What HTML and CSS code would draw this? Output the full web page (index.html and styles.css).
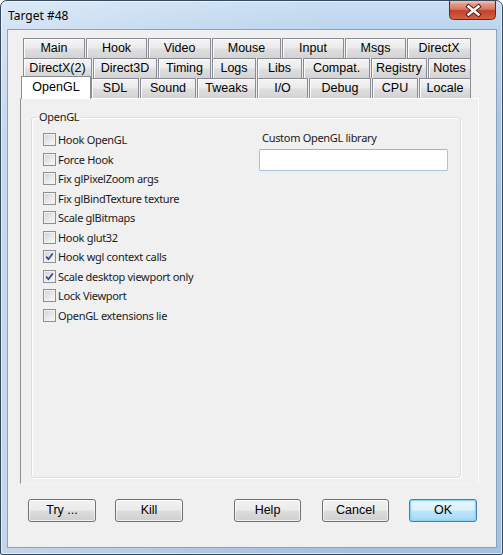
FILE: index.html
```html
<!DOCTYPE html>
<html>
<head>
<meta charset="utf-8">
<title>Target #48</title>
<link rel="stylesheet" href="styles.css">
</head>
<body>
<div class="window">
  <div class="titlebar">
    <span class="title">Target #48</span>
    <div class="close">
      <svg width="47" height="19" viewBox="0 0 47 19">
        <defs>
          <linearGradient id="cg" x1="0" y1="0" x2="0" y2="1">
            <stop offset="0" stop-color="#eab0a2"/>
            <stop offset="0.45" stop-color="#d6765f"/>
            <stop offset="0.52" stop-color="#c2412a"/>
            <stop offset="1" stop-color="#d8623f"/>
          </linearGradient>
        </defs>
        <path d="M0.5 0 V14.5 A4 4 0 0 0 4.5 18.5 H42.5 A4 4 0 0 0 46.5 14.5 V0" fill="url(#cg)" stroke="#6a2418"/>
        <path d="M1.5 1 H45.5" stroke="#f3c9bd" stroke-width="1"/>
        <path d="M19.5 5.5 L29.5 13.5 M29.5 5.5 L19.5 13.5" stroke="#4a2019" stroke-width="4.4" stroke-linecap="square"/>
        <path d="M19.5 5.5 L29.5 13.5 M29.5 5.5 L19.5 13.5" stroke="#ffffff" stroke-width="2.4" stroke-linecap="square"/>
      </svg>
    </div>
  </div>
  <div class="client">
    <div class="tabctl">
      <div class="tabrow">
        <div class="tab w63">Main</div>
        <div class="tab w62">Hook</div>
        <div class="tab w64">Video</div>
        <div class="tab w70">Mouse</div>
        <div class="tab w63">Input</div>
        <div class="tab w62">Msgs</div>
        <div class="tab w65">DirectX</div>
      </div>
      <div class="tabrow">
        <div class="tab w70">DirectX(2)</div>
        <div class="tab w65">Direct3D</div>
        <div class="tab w54">Timing</div>
        <div class="tab w45">Logs</div>
        <div class="tab w46">Libs</div>
        <div class="tab w68">Compat.</div>
        <div class="tab w57">Registry</div>
        <div class="tab w44">Notes</div>
      </div>
      <div class="tabrow">
        <div class="tab selected">OpenGL</div>
        <div class="tab w49">SDL</div>
        <div class="tab w57">Sound</div>
        <div class="tab w60">Tweaks</div>
        <div class="tab w52">I/O</div>
        <div class="tab w63">Debug</div>
        <div class="tab w47">CPU</div>
        <div class="tab w53">Locale</div>
      </div>
      <div class="panel">
        <fieldset class="group">
          <legend>OpenGL</legend>
          <div class="cols">
            <div class="checks">
              <div class="check"><span class="cb"></span>Hook OpenGL</div>
              <div class="check"><span class="cb"></span>Force Hook</div>
              <div class="check"><span class="cb"></span>Fix glPixelZoom args</div>
              <div class="check"><span class="cb"></span>Fix glBindTexture texture</div>
              <div class="check"><span class="cb"></span>Scale glBitmaps</div>
              <div class="check"><span class="cb"></span>Hook glut32</div>
              <div class="check"><span class="cb on"><svg width="11" height="11" viewBox="0 0 11 11"><path d="M2.2 5.6 L4.4 8.2 L8.8 2.4" fill="none" stroke="#2d4790" stroke-width="1.7"/></svg></span>Hook wgl context calls</div>
              <div class="check"><span class="cb on"><svg width="11" height="11" viewBox="0 0 11 11"><path d="M2.2 5.6 L4.4 8.2 L8.8 2.4" fill="none" stroke="#2d4790" stroke-width="1.7"/></svg></span>Scale desktop viewport only</div>
              <div class="check"><span class="cb"></span>Lock Viewport</div>
              <div class="check"><span class="cb"></span>OpenGL extensions lie</div>
            </div>
            <div class="custom">
              <div class="label">Custom OpenGL library</div>
              <div class="input"></div>
            </div>
          </div>
        </fieldset>
      </div>
    </div>
    <div class="btnrow">
      <div class="btn b-try">Try ...</div>
      <div class="btn b-kill">Kill</div>
      <div class="btn b-help">Help</div>
      <div class="btn b-cancel">Cancel</div>
      <div class="btn b-ok default">OK</div>
    </div>
  </div>
</div>
</body>
</html>
```
FILE: styles.css
```css
* { box-sizing: border-box; }
html, body { margin: 0; padding: 0; }
body {
  width: 503px;
  height: 555px;
  overflow: hidden;
  background: #ffffff;
  font-family: "Noto Sans", "DejaVu Sans", sans-serif;
}

.window {
  width: 503px;
  height: 555px;
  border: 1px solid #38495c;
  border-radius: 7px 7px 2px 2px;
  padding: 0 5px 6px 6px;
  display: flex;
  flex-direction: column;
  background:
    linear-gradient(to right, rgba(255,255,255,0.35) 0, rgba(255,255,255,0.1) 45%, rgba(255,255,255,0) 70%),
    linear-gradient(to bottom, #c9def3 0, #bcd5ee 28px, #a9c6e4 120px, #a4c1df 100%);
  box-shadow: inset 0 0 0 1px rgba(255,255,255,0.55);
}

.titlebar {
  height: 28px;
  display: flex;
  justify-content: space-between;
  align-items: flex-start;
}
.title {
  margin: 7px 0 0 1px;
  font-size: 12px;
  line-height: 16px;
  color: #000;
}
.close {
  width: 47px;
  height: 19px;
  margin-right: 1px;
}
.close svg { display: block; }

.client {
  flex: 1;
  display: flex;
  flex-direction: column;
  background: #f0f0f0;
  border: 1px solid #8aa3bd;
}

.tabctl {
  margin: 8px 17px 0 12px;
  display: flex;
  flex-direction: column;
}
.tabrow {
  height: 20px;
  display: flex;
  padding-left: 3px;
}
.tab {
  height: 20px;
  margin-right: 1px;
  border: 1px solid #898c95;
  border-bottom: none;
  background: linear-gradient(to bottom, #f4f4f4 0, #ebebeb 45%, #dedede 55%, #d3d3d3 100%);
  box-shadow: inset 1px 1px 0 #fbfbfb;
  font-family: "Liberation Sans", Arial, sans-serif;
  font-size: 12.5px;
  line-height: 19px;
  text-align: center;
  color: #000;
  white-space: nowrap;
}
.tab.selected {
  position: relative;
  z-index: 1;
  width: 70px;
  height: 23px;
  margin: -2px 0 0 -2px;
  background: #ffffff;
  box-shadow: none;
  line-height: 21px;
}
.w44 { width: 43px; }
.w45 { width: 44px; }
.w46 { width: 45px; }
.w47 { width: 46px; }
.w49 { width: 48px; }
.w52 { width: 51px; }
.w53 { width: 52px; }
.w54 { width: 53px; }
.w57 { width: 56px; }
.w60 { width: 59px; }
.w62 { width: 61px; }
.w63 { width: 62px; }
.w64 { width: 63px; }
.w65 { width: 64px; }
.w68 { width: 67px; }
.w70 { width: 69px; }

.panel {
  height: 386px;
  display: flex;
  flex-direction: column;
  border-left: 1px solid #8d8d8d;
  border-top: 1px solid #ffffff;
  border-right: 1px solid #ffffff;
  border-bottom: 1px solid #f4f4f4;
  padding: 10px 17px 5px 10px;
}

.group {
  flex: 1;
  margin: 0;
  min-width: 0;
  padding: 5px 0 0 5px;
  border: 1px solid #d5dfe5;
  border-radius: 3px;
  box-shadow: 1px 1px 0 #ffffff, inset 1px 1px 0 #ffffff;
}
.group legend,
.check,
.custom .label {
  font-size: 11px;
  letter-spacing: -0.3px;
  color: #1a1a1a;
}
.group legend {
  padding: 0 2px;
  line-height: 16px;
}

.cols {
  display: flex;
}
.checks {
  width: 222px;
  padding-left: 6px;
}
.check {
  height: 19.5px;
  display: flex;
  align-items: center;
  white-space: nowrap;
}
.cb {
  width: 13px;
  height: 13px;
  flex: none;
  margin-right: 2px;
  border: 1px solid #8e8f8f;
  background: linear-gradient(135deg, #cdd0d5 0, #e6e7e9 50%, #f9f9f9 100%);
  box-shadow: inset 0 0 0 1px #f2f2f2;
  display: flex;
  align-items: center;
  justify-content: center;
}
.cb svg { display: block; }

.custom {
  width: 189px;
}
.custom .label {
  padding-left: 3px;
  line-height: 16px;
}
.custom .input {
  margin-top: 3px;
  height: 22px;
  background: #ffffff;
  border: 1px solid #a7c2da;
  border-top-color: #9bb5cf;
  border-radius: 2px;
}

.btnrow {
  display: flex;
  margin-top: 15px;
  padding-left: 20px;
}
.btn {
  height: 23px;
  border: 1px solid #707070;
  border-radius: 3px;
  background: linear-gradient(to bottom, #f2f2f2 0, #ebebeb 48%, #dddddd 52%, #cfcfcf 100%);
  box-shadow: inset 0 0 0 1px rgba(255,255,255,0.7);
  font-family: "Liberation Sans", Arial, sans-serif;
  font-size: 12.5px;
  line-height: 21px;
  text-align: center;
  color: #000;
}
.b-try { width: 68px; }
.b-kill { width: 68px; margin-left: 19px; }
.b-help { width: 67px; margin-left: 51px; }
.b-cancel { width: 67px; margin-left: 21px; }
.b-ok { width: 68px; margin-left: 20px; }
.btn.default {
  border-color: #3c7fb1;
  background: linear-gradient(to bottom, #eaf6fd 0, #d9f0fc 48%, #bee6fd 52%, #a7d9f5 100%);
  box-shadow: inset 0 0 0 1px #8ed6f6, inset 0 0 2px 1px rgba(100,200,240,0.5);
}
```
